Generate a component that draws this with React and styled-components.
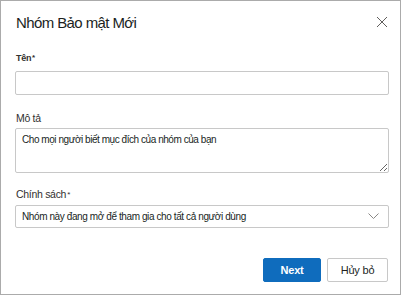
import React from 'react';
import styled, { createGlobalStyle } from 'styled-components';

const GlobalStyle = createGlobalStyle`
  html, body {
    margin: 0;
    padding: 0;
    background: #fff;
  }
  body {
    font-family: "Liberation Sans", Arial, sans-serif;
    color: #323130;
  }
`;

const Dialog = styled.div`
  box-sizing: border-box;
  width: 401px;
  height: 295px;
  border: 1px solid #ababab;
  background: #fff;
  padding: 0 12px 0 14px;
  display: flex;
  flex-direction: column;
`;

const Header = styled.div`
  display: flex;
  justify-content: space-between;
  align-items: center;
  height: 42px;
`;

const Title = styled.h1`
  margin: 0 0 0 1px;
  font-family: "Liberation Sans", Arial, sans-serif;
  font-weight: 400;
  font-size: 15px;
  letter-spacing: -0.6px;
  color: #201f1e;
`;

const CloseButton = styled.button`
  border: none;
  background: none;
  padding: 0;
  width: 12px;
  height: 12px;
  margin-right: 0;
  display: flex;
  align-items: center;
  justify-content: center;
  cursor: pointer;
`;

const Field = styled.div`
  display: flex;
  flex-direction: column;
  margin-top: ${p => p.$top}px;
`;

const Label = styled.label`
  font-size: ${p => (p.$small ? 9 : 10.5)}px;
  font-weight: ${p => (p.$small ? 700 : 400)};
  letter-spacing: -0.3px;
  color: #323130;
  margin-bottom: ${p => p.$gap}px;
  margin-left: 1px;
  line-height: 12px;
`;

const Star = styled.span`
  font-size: 8px;
  vertical-align: 1px;
  margin-left: 1px;
`;

const Input = styled.input`
  box-sizing: border-box;
  width: 374px;
  height: 24px;
  border: 1px solid #c8c8c8;
  border-radius: 2px;
  outline: none;
`;

const TextArea = styled.textarea`
  box-sizing: border-box;
  width: 374px;
  height: 45px;
  border: 1px solid #c8c8c8;
  border-radius: 2px;
  padding: 5px 6px;
  font-family: "Liberation Sans", Arial, sans-serif;
  font-size: 10px;
  letter-spacing: -0.45px;
  color: #201f1e;
  outline: none;
  resize: vertical;
`;

const Select = styled.div`
  box-sizing: border-box;
  width: 374px;
  height: 23px;
  border: 1px solid #c8c8c8;
  border-radius: 2px;
  padding: 0 9px 0 6px;
  display: flex;
  align-items: center;
  justify-content: space-between;
  font-size: 10px;
  letter-spacing: -0.4px;
  color: #201f1e;
`;

const Footer = styled.div`
  display: flex;
  justify-content: flex-end;
  gap: 6px;
  margin-top: 30px;
`;

const Button = styled.button`
  box-sizing: border-box;
  height: 24px;
  width: ${p => p.$w}px;
  border-radius: 2px;
  font-family: "Liberation Sans", Arial, sans-serif;
  font-size: 11px;
  font-weight: ${p => (p.$primary ? 700 : 400)};
  letter-spacing: -0.2px;
  background: ${p => (p.$primary ? '#0f6cbd' : '#fff')};
  color: ${p => (p.$primary ? '#fff' : '#201f1e')};
  border: 1px solid ${p => (p.$primary ? '#0f6cbd' : '#c8c8c8')};
  cursor: pointer;
`;

export default function App() {
  return (
    <>
      <GlobalStyle />
      <Dialog>
        <Header>
          <Title>Nhóm Bảo mật Mới</Title>
          <CloseButton aria-label="Đóng">
            <svg width="12" height="12" viewBox="0 0 12 12">
              <path d="M1 1L11 11M11 1L1 11" stroke="#605e5c" strokeWidth="1" />
            </svg>
          </CloseButton>
        </Header>
        <Field $top={9}>
          <Label $small $gap={7}>Tên<Star>*</Star></Label>
          <Input />
        </Field>
        <Field $top={17}>
          <Label $gap={4}>Mô tả</Label>
          <TextArea defaultValue="Cho mọi người biết mục đích của nhóm của bạn" />
        </Field>
        <Field $top={15}>
          <Label $gap={4}>Chính sách<Star>*</Star></Label>
          <Select>
            <span>Nhóm này đang mở để tham gia cho tất cả người dùng</span>
            <svg width="11" height="7" viewBox="0 0 11 7">
              <path d="M0.5 0.5L5.5 5.5L10.5 0.5" stroke="#8a8886" strokeWidth="1" fill="none" />
            </svg>
          </Select>
        </Field>
        <Footer>
          <Button $primary $w={58}>Next</Button>
          <Button $w={61}>Hủy bỏ</Button>
        </Footer>
      </Dialog>
    </>
  );
}
